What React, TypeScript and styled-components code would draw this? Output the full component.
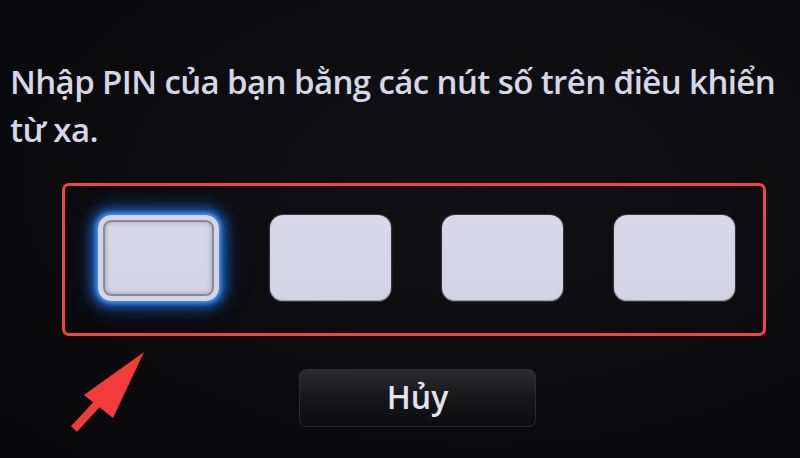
import React from 'react';
import styled, {createGlobalStyle} from 'styled-components';

const GlobalStyle = createGlobalStyle`
  html, body {
    margin: 0;
    padding: 0;
    background: #0b0b0d;
  }
  body {
    font-family: "Open Sans", "Noto Sans", sans-serif;
  }
`;

const Screen = styled.div`
  position: relative;
  width: 800px;
  height: 458px;
  overflow: hidden;
  background: radial-gradient(ellipse at 60% 40%, #121215 0%, #0a0a0c 70%, #08080a 100%);
  display: flex;
  flex-direction: column;
`;

const Message = styled.p`
  margin: 0;
  padding: 58px 0 0 10px;
  color: #d6d7e6;
  font-size: 33px;
  font-weight: 600;
  line-height: 48px;
  letter-spacing: -0.6px;
  white-space: nowrap;
`;

const PinFrame = styled.div`
  box-sizing: border-box;
  margin: 29px 0 0 62px;
  width: 704px;
  height: 153px;
  border: 3px solid #f24444;
  border-radius: 7px;
  display: flex;
  align-items: flex-start;
  gap: 51px;
  padding: 29px 0 0 33px;
`;

const PinCell = styled.div<{$focused?: boolean}>`
  box-sizing: border-box;
  width: 121px;
  height: 86px;
  border-radius: 13px;
  background: linear-gradient(180deg, #d7d8ea 0%, #d3d4e6 100%);
  ${p => p.$focused ? `
    border: 5px solid #d4d5e6;
    box-shadow: 0 0 4px 2px #4a9af5, 0 0 12px 6px rgba(35, 120, 235, 0.75),
      0 0 22px 8px rgba(20, 80, 200, 0.35),
      inset 0 0 0 2px #8b8995, inset 0 0 4px 3px #a9a8b6;
  ` : `
    box-shadow: inset 0 -1px 1px #9a98a4, 0 0 1px 1px #3a3840;
  `}
`;

const Actions = styled.div`
  display: flex;
  margin: 33px 0 0 299px;
`;

const CancelButton = styled.button`
  box-sizing: border-box;
  width: 237px;
  height: 58px;
  border-radius: 7px;
  border: 1px solid #2b2b30;
  background: linear-gradient(180deg, #2c2c31 0%, #18181b 45%, #0c0c0e 100%);
  color: #e2e3ee;
  font-family: "Open Sans", "Noto Sans", sans-serif;
  font-size: 32px;
  font-weight: 600;
  line-height: 1;
  padding: 0 0 2px;
  cursor: pointer;
`;

const Arrow = styled.svg`
  position: absolute;
  left: 60px;
  top: 340px;
`;

export default function App() {
  return (
    <>
      <GlobalStyle/>
      <Screen>
        <Message>
          Nhập PIN của bạn bằng các nút số trên điều khiển<br/>từ xa.
        </Message>
        <PinFrame>
          <PinCell $focused/>
          <PinCell/>
          <PinCell/>
          <PinCell/>
        </PinFrame>
        <Actions>
          <CancelButton>Hủy</CancelButton>
        </Actions>
        <Arrow width="100" height="100" viewBox="0 0 100 100">
          <line x1="14" y1="89" x2="50" y2="50" stroke="#f23c3c" strokeWidth="8"/>
          <polygon points="84,12 24,55 53,78" fill="#f23c3c"/>
        </Arrow>
      </Screen>
    </>
  );
}
